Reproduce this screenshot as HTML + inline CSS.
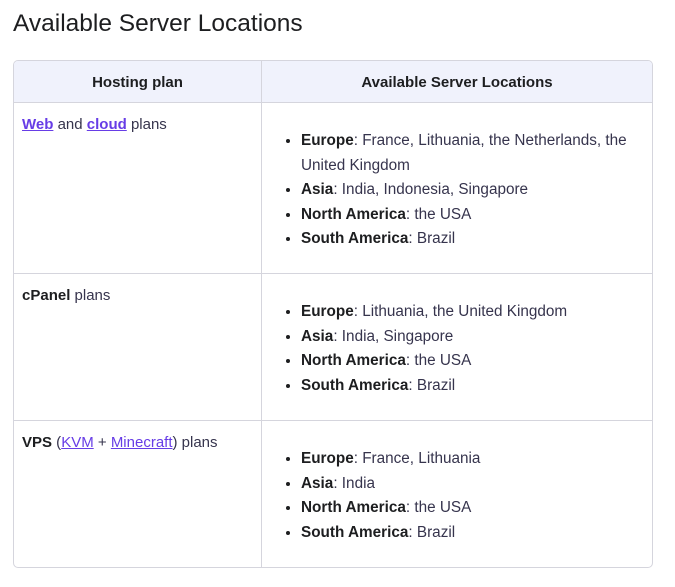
<!DOCTYPE html>
<html><head><meta charset="utf-8"><style>
body{margin:0;background:#fff;font-family:"Liberation Sans",sans-serif;}
.page{position:relative;width:675px;height:587px;color:#1d1e20}
h1{position:absolute;left:13px;top:10px;margin:0;font-size:24.5px;font-weight:normal;color:#1d1e20}
.tbl{position:absolute;left:13px;top:60px;width:638px;height:506px;border:1px solid #d5d5dd;border-radius:5px;overflow:hidden}
.hd{position:absolute;left:0;top:0;width:638px;height:41px;background:#f0f2fc;border-bottom:1px solid #d5d5dd}
.vl{position:absolute;left:247px;top:0;width:1px;height:506px;background:#d5d5dd}
.hl{position:absolute;left:0;width:638px;height:1px;background:#d5d5dd}
.th{position:absolute;top:13px;font-weight:bold;font-size:15px;text-align:center}
.c1{position:absolute;left:8px;font-size:15px;color:#36344d}
.c1 b{color:#1d1e20}
a{color:#673de6}
a.b{font-weight:bold}
ul{position:absolute;left:283px;margin:0;padding:0 0 0 18px;font-size:15.3px;line-height:24.5px;color:#36344d;width:350px}
ul b{color:#1d1e20}
li::marker{color:#1d1e20}
</style></head><body><div class="page">
<h1>Available Server Locations</h1>
<div class="tbl">
<div class="hd"></div>
<div class="vl"></div>
<div class="hl" style="top:212px"></div>
<div class="hl" style="top:359px"></div>
<div class="th" style="left:0;width:247px">Hosting plan</div>
<div class="th" style="left:248px;width:390px">Available Server Locations</div>
<div class="c1" style="top:55px"><a class="b" href="#">Web</a> and <a class="b" href="#">cloud</a> plans</div>
<div class="c1" style="top:226px"><b>cPanel</b> plans</div>
<div class="c1" style="top:373px"><b>VPS</b> (<a href="#">KVM</a> + <a href="#">Minecraft</a>) plans</div>
</div>
<ul style="top:129px"><li><b>Europe</b>: France, Lithuania, the Netherlands, the United Kingdom</li><li><b>Asia</b>: India, Indonesia, Singapore</li><li><b>North America</b>: the USA</li><li><b>South America</b>: Brazil</li></ul>
<ul style="top:300px"><li><b>Europe</b>: Lithuania, the United Kingdom</li><li><b>Asia</b>: India, Singapore</li><li><b>North America</b>: the USA</li><li><b>South America</b>: Brazil</li></ul>
<ul style="top:447px"><li><b>Europe</b>: France, Lithuania</li><li><b>Asia</b>: India</li><li><b>North America</b>: the USA</li><li><b>South America</b>: Brazil</li></ul>
</div></body></html>
